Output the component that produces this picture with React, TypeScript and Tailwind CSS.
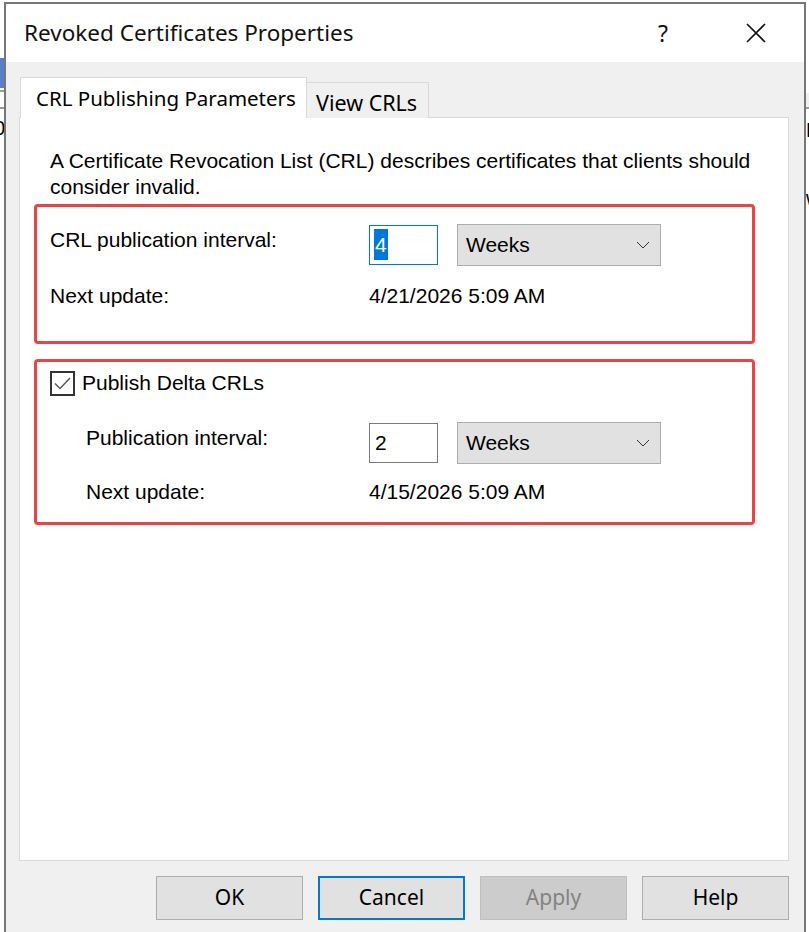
import React from "react";

const ui = { fontFamily: '"Liberation Sans", Arial, sans-serif' };
const seg = { fontFamily: '"Noto Sans", "Open Sans", sans-serif' };

function Chevron() {
  return (
    <svg width="14" height="8" viewBox="0 0 14 8" className="block">
      <path d="M1 1 L7 7 L13 1" fill="none" stroke="#333" strokeWidth="1" />
    </svg>
  );
}

function Select() {
  return (
    <div className="w-[204px] h-[42px] bg-[#e1e1e1] border border-[#adadad] flex items-center justify-between pl-[8px] pr-[10px] text-[21px] text-black">
      <span>Weeks</span>
      <Chevron />
    </div>
  );
}

function Btn({ label, variant }: { label: string; variant?: "focus" | "disabled" }) {
  const cls =
    variant === "focus"
      ? "border-2 border-[#0078d7] bg-[#e1e1e1] text-black"
      : variant === "disabled"
      ? "border border-[#bfbfbf] bg-[#cccccc] text-[#838383]"
      : "border border-[#adadad] bg-[#e1e1e1] text-black";
  return (
    <div className={`w-[147px] h-[44px] flex items-center justify-center text-[21px] ${cls}`} style={seg}>
      {label}
    </div>
  );
}

export default function App() {
  return (
    <div className="relative w-[809px] h-[932px] bg-white overflow-hidden" style={ui}>
      {/* background app fragments */}
      <div className="absolute left-0 top-[58px] w-[4px] h-[30px] bg-[#5a7fc4]" />
      <div className="absolute left-0 top-[90px] w-[4px] h-[2px] bg-[#9a9a9a]" />
      <div className="absolute left-0 top-[107px] w-[4px] h-[2px] bg-[#9a9a9a]" />
      <div className="absolute left-[-6px] top-[118px] text-[20px] text-black leading-none">0</div>
      <div className="absolute right-0 top-[93px] w-[3px] h-[15px] bg-[#f0f0f0]" />
      <div className="absolute right-0 top-[107px] w-[3px] h-[2px] bg-[#9a9a9a]" />
      <div className="absolute left-[806px] top-[120px] text-[20px] text-black leading-none">R</div>
      <div className="absolute left-[806px] top-[188px] text-[20px] text-black leading-none">w</div>

      {/* dialog window */}
      <div className="absolute left-[4px] top-[2px] w-[802px] h-[960px] border-2 border-[#777777] bg-[#f0f0f0] flex flex-col">
        {/* title bar */}
        <div className="h-[58px] bg-white flex items-center justify-between pl-[18px] pr-[38px] shrink-0">
          <span className="text-[22.5px] text-[#111]" style={seg}>
            Revoked Certificates Properties
          </span>
          <div className="flex items-center gap-[78px] text-[#111]">
            <span className="text-[23px]" style={seg}>?</span>
            <svg width="20" height="20" viewBox="0 0 20 20">
              <path d="M1 1 L19 19 M19 1 L1 19" stroke="#111" strokeWidth="1.6" fill="none" />
            </svg>
          </div>
        </div>

        {/* body */}
        <div className="px-[13px] pt-[15px] flex flex-col">
          {/* tabs */}
          <div className="flex items-end relative z-10 -mb-px">
            <div
              className="h-[41px] w-[287px] ml-px bg-white border border-b-0 border-[#d9d9d9] flex items-center pl-[15px] text-[20.5px] text-black"
              style={seg}
            >
              CRL Publishing Parameters
            </div>
            <div
              className="h-[36px] w-[122px] bg-[#f0f0f0] border border-l-0 border-b-0 border-[#d9d9d9] flex items-center pl-[9px] pt-[6px] text-[21.5px] text-black"
              style={seg}
            >
              View CRLs
            </div>
          </div>

          {/* panel */}
          <div className="w-[770px] h-[744px] bg-white border border-[#d9d9d9] pl-[14px] pt-[30px]">
            <p className="pl-[16px] text-[21px] leading-[26px] text-black w-[740px]">
              A Certificate Revocation List (CRL) describes certificates that clients should consider invalid.
            </p>

            {/* box 1 */}
            <div className="mt-[4px] w-[721px] h-[140px] border-[3px] border-[#e84545] rounded-[4px] pl-[13px] pt-[17px]">
              <div className="flex items-center h-[42px]">
                <div className="w-[319px] text-[21px] text-black -mt-[10px]">CRL publication interval:</div>
                <div className="w-[69px] h-[40px] border border-[#0078d7] bg-white flex items-center pl-[4px] -mt-[1px]">
                  <span className="bg-[#0078d7] text-white text-[21px] leading-[31px] px-px">4</span>
                </div>
                <div className="ml-[19px]">
                  <Select />
                </div>
              </div>
              <div className="flex items-center mt-[14px] text-[21px] text-black">
                <div className="w-[319px]">Next update:</div>
                <div>4/21/2026 5:09 AM</div>
              </div>
            </div>

            {/* box 2 */}
            <div className="mt-[15px] w-[721px] h-[166px] border-[3px] border-[#e84545] rounded-[4px] pl-[13px] pt-[8px]">
              <div className="flex items-center h-[26px]">
                <div className="w-[25px] h-[25px] border-2 border-[#333] bg-white flex items-center justify-center">
                  <svg width="17" height="13" viewBox="0 0 17 13">
                    <path d="M1 6.5 L6 11.5 L16 1" stroke="#555" strokeWidth="1.4" fill="none" />
                  </svg>
                </div>
                <span className="ml-[7px] text-[21px] text-black">Publish Delta CRLs</span>
              </div>
              <div className="flex items-center h-[42px] mt-[26px]">
                <div className="w-[319px] pl-[36px] text-[21px] text-black -mt-[11px]">Publication interval:</div>
                <div className="w-[69px] h-[40px] border border-[#7a7a7a] bg-white flex items-center pl-[5px] -mt-[1px]">
                  <span className="text-black text-[21px]">2</span>
                </div>
                <div className="ml-[19px]">
                  <Select />
                </div>
              </div>
              <div className="flex items-center mt-[12px] text-[21px] text-black">
                <div className="w-[319px] pl-[36px]">Next update:</div>
                <div>4/15/2026 5:09 AM</div>
              </div>
            </div>
          </div>

          {/* buttons */}
          <div className="flex justify-end gap-[15px] mt-[15px] pr-[2px]">
            <Btn label="OK" />
            <Btn label="Cancel" variant="focus" />
            <Btn label="Apply" variant="disabled" />
            <Btn label="Help" />
          </div>
        </div>
      </div>
    </div>
  );
}
